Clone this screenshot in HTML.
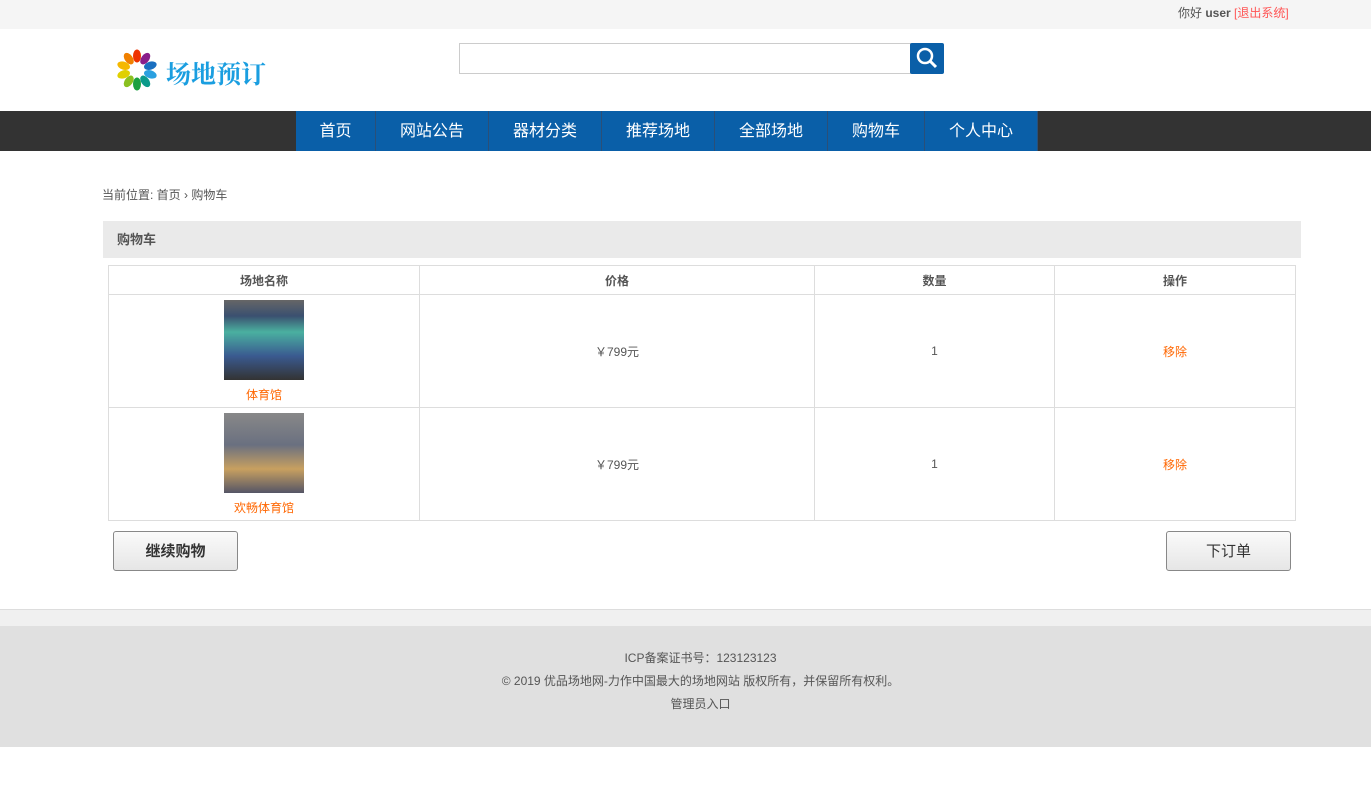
<!DOCTYPE html>
<html><head><meta charset="utf-8"><style>
*{margin:0;padding:0;box-sizing:border-box}
body{width:1371px;height:807px;background:#fff;font-family:"Liberation Sans","Noto Sans CJK SC",sans-serif;font-size:12px;color:#555;position:relative;overflow:hidden}
.abs{position:absolute}
.top{left:0;top:0;width:1371px;height:29px;background:#f5f5f5}
.nav{left:0;top:111px;width:1371px;height:40px;background:#333}
.nav div{position:absolute;top:0;height:40px;background:#0a5fa8;color:#fff;font-size:16px;line-height:42px;text-align:center;border-right:1px solid #2a4f78}
table{position:absolute;left:108px;top:265px;width:1188px;border-collapse:collapse}
td,th{border:1px solid #ddd;text-align:center;font-size:12px;color:#555}
th{height:29px;font-weight:bold}
td{height:113px}
.img{display:block;margin:0 auto 6px;width:80px;height:80px}
.or{color:#f60}
.btn{position:absolute;top:531px;width:125px;height:40px;border:1px solid #888;border-radius:3px;background:linear-gradient(#fafafa,#e6e6e6);font-size:15px;color:#333;text-align:center;line-height:40px}
</style></head><body>
<div class="abs top"></div>
<div class="abs" style="left:1178px;top:4px;font-size:12px;color:#555">你好 <b>user</b> <span style="color:#f55">[退出系统]</span></div>
<svg class="abs" style="left:114px;top:48px" width="46" height="44" viewBox="0 0 46 44">
<g transform="translate(23,22)">
<ellipse cx="0" cy="-14" rx="4" ry="6.5" fill="#e30" transform="rotate(0)"/>
<ellipse cx="0" cy="-14" rx="4" ry="6.5" fill="#8a1d8a" transform="rotate(36)"/>
<ellipse cx="0" cy="-14" rx="4" ry="6.5" fill="#1a6fc0" transform="rotate(72)"/>
<ellipse cx="0" cy="-14" rx="4" ry="6.5" fill="#2aa0e0" transform="rotate(108)"/>
<ellipse cx="0" cy="-14" rx="4" ry="6.5" fill="#0a9a8a" transform="rotate(144)"/>
<ellipse cx="0" cy="-14" rx="4" ry="6.5" fill="#1aa040" transform="rotate(180)"/>
<ellipse cx="0" cy="-14" rx="4" ry="6.5" fill="#8ac020" transform="rotate(216)"/>
<ellipse cx="0" cy="-14" rx="4" ry="6.5" fill="#e0d000" transform="rotate(252)"/>
<ellipse cx="0" cy="-14" rx="4" ry="6.5" fill="#f5b800" transform="rotate(288)"/>
<ellipse cx="0" cy="-14" rx="4" ry="6.5" fill="#f08000" transform="rotate(324)"/>
</g></svg>
<div class="abs" style="left:166px;top:55px;font-size:25px;font-weight:bold;color:#1a9ee0;font-family:'Noto Serif CJK SC',serif">场地预订</div>
<div class="abs" style="left:459px;top:43px;width:452px;height:31px;border:1px solid #ccc"></div>
<div class="abs" style="left:910px;top:43px;width:34px;height:31px;background:#0a5fa8;border-radius:2px">
<svg width="34" height="31"><circle cx="15" cy="13" r="7" stroke="#fff" stroke-width="2.5" fill="none"/><line x1="20" y1="18" x2="26" y2="24" stroke="#fff" stroke-width="3"/></svg></div>
<div class="abs nav">
<div style="left:296px;width:80px">首页</div>
<div style="left:376px;width:113px">网站公告</div>
<div style="left:489px;width:113px">器材分类</div>
<div style="left:602px;width:113px">推荐场地</div>
<div style="left:715px;width:113px">全部场地</div>
<div style="left:828px;width:97px">购物车</div>
<div style="left:925px;width:113px">个人中心</div>
</div>
<div class="abs" style="left:102px;top:186px">当前位置: 首页 › 购物车</div>
<div class="abs" style="left:103px;top:221px;width:1198px;height:37px;background:#eaeaea;font-size:13px;font-weight:bold;line-height:37px;padding-left:14px">购物车</div>
<table>
<tr><th style="width:311px">场地名称</th><th style="width:395px">价格</th><th style="width:240px">数量</th><th>操作</th></tr>
<tr><td><div class="img" style="background:linear-gradient(#666 0%,#3a5070 20%,#4ab0a0 40%,#3a5a90 70%,#333 100%)"></div><span class="or">体育馆</span></td><td>￥799元</td><td>1</td><td class="or">移除</td></tr>
<tr><td><div class="img" style="background:linear-gradient(#888 0%,#6a7080 40%,#c8a060 70%,#556 100%)"></div><span class="or">欢畅体育馆</span></td><td>￥799元</td><td>1</td><td class="or">移除</td></tr>
</table>
<div class="btn" style="left:113px;font-weight:bold">继续购物</div>
<div class="btn" style="left:1166px">下订单</div>
<div class="abs" style="left:0;top:609px;width:1371px;height:17px;background:#f0f0f0;border-top:1px solid #ddd"></div>
<div class="abs" style="left:0;top:626px;width:1371px;height:121px;background:#e0e0e0;text-align:center;line-height:23px;padding-top:21px;padding-left:30px">ICP备案证书号：123123123<br>© 2019 优品场地网-力作中国最大的场地网站 版权所有，并保留所有权利。<br>管理员入口</div>
</body></html>
